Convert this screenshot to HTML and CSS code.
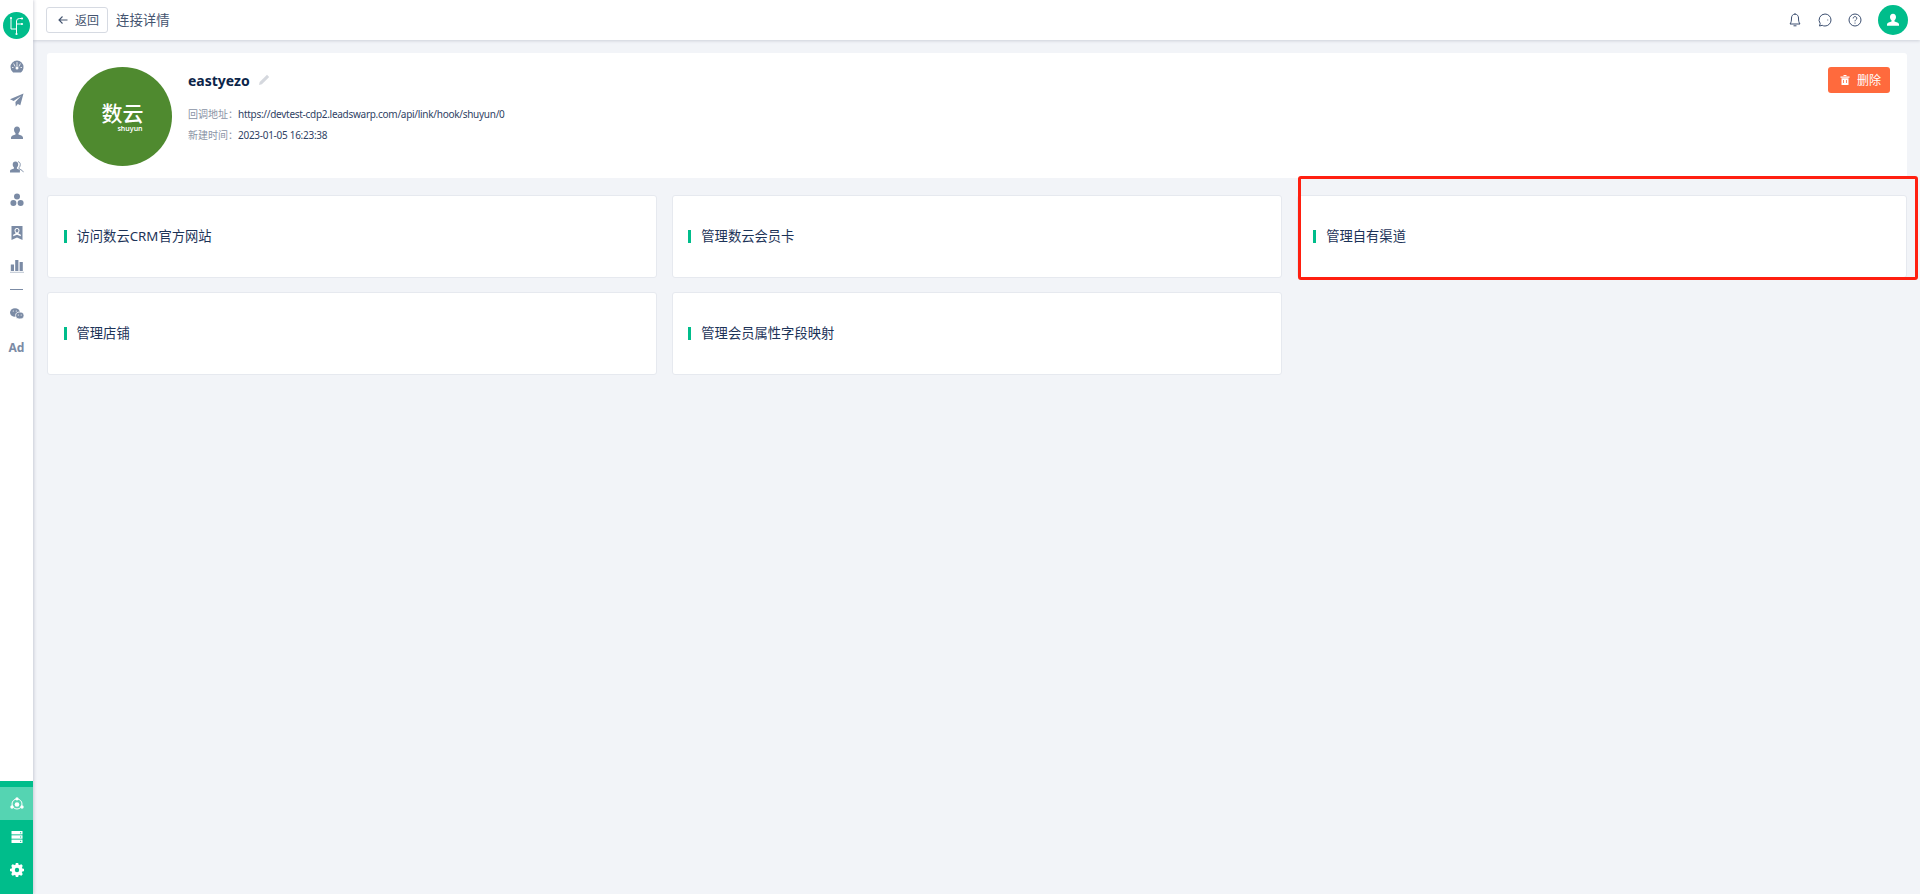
FILE: index.html
```html
<!DOCTYPE html>
<html lang="zh-CN">
<head>
<meta charset="utf-8">
<title>连接详情</title>
<link rel="stylesheet" href="styles.css">
</head>
<body>
<div class="app">
  <aside class="sidebar">
    <div class="logo">
      <svg viewBox="0 0 27 27" width="27" height="27"><circle cx="13.5" cy="13.5" r="13.5" fill="#00bd8b"/><g fill="none" stroke="#fff" stroke-width="1"><path d="M8 6v11h5.500v5M13.500 17v-8q0-2.500 3-2.500h2.500M13.500 12h5.500"/></g><g fill="#fff"><circle cx="8" cy="6" r="1.100"/><circle cx="19" cy="6.500" r="1.100"/><circle cx="19" cy="12" r="1.100"/><circle cx="13.500" cy="22" r="1.100"/></g></svg>
    </div>
    <nav class="nav">
      <a class="nav-item"><svg viewBox="0 0 14 14" class="ic"><path d="M7 .5a6.500 6.500 0 0 1 6.500 6.500c0 2.300-1 4.300-2.600 5.600H3.100A7 7 0 0 1 .5 7 6.500 6.500 0 0 1 7 .5z"/><path d="M7 2v4.500M3.600 3.500l1.500 3M10.400 3.500l-1.500 3M2 7.500h1.500M10.500 7.500H12" stroke="#fff" stroke-width=".8"/><circle cx="7" cy="8" r="1.500" fill="#fff"/></svg></a>
      <a class="nav-item"><svg viewBox="0 0 14 14" class="ic"><path d="M13.500.5 0 6.200l3.700 1.700L11 3 5.400 9l.4 4.500 2-2.500 2.500 1.200z"/></svg></a>
      <a class="nav-item"><svg viewBox="0 0 14 14" class="ic"><path d="M7 .5c1.900 0 3 1.500 3 3.300 0 1.500-.7 2.800-1.500 3.400v1.300c1.800.6 4.500 1.300 4.500 3v1.500H1v-1.500c0-1.700 2.700-2.400 4.500-3V7.200C4.700 6.600 4 5.300 4 3.800 4 2 5.100.5 7 .5z"/></svg></a>
      <a class="nav-item"><svg viewBox="0 0 14 14" class="ic"><path d="M5.500 1.500c1.700 0 2.700 1.300 2.700 3 0 1.400-.6 2.500-1.300 3.100v1.100c1 .3 2.300.7 3 1.400v2.400H0V11c0-1.300 2.200-1.900 4-2.400V7.600c-.7-.6-1.300-1.700-1.300-3.100 0-1.700 1-3 2.800-3z"/><path d="M8 1.600c1.500.3 2.300 1.500 2.300 3 0 1.200-.5 2.300-1.200 3v1.300l3 1.500 1.400 1.800" fill="none" stroke="#7b8ba5" stroke-width=".9"/></svg></a>
      <a class="nav-item"><svg viewBox="0 0 14 14" class="ic"><circle cx="7" cy="3.600" r="3"/><circle cx="3.400" cy="10" r="3"/><circle cx="10.600" cy="10" r="3"/></svg></a>
      <a class="nav-item"><svg viewBox="0 0 14 14" class="ic"><path fill-rule="evenodd" d="M1.500 0h11v14L7 11.500 1.500 14zM7 2c-1.500 0-2.500 1.100-2.500 2.600 0 1 .4 1.800 1 2.300v.6l-2.300 1.300v1.400L7 8.800l3.800 1.400V8.800L8.500 7.500v-.6c.6-.5 1-1.300 1-2.300C9.500 3.100 8.500 2 7 2zM7 3c.9 0 1.500.7 1.500 1.600S7.900 6.400 7 6.400 5.500 5.500 5.500 4.600 6.100 3 7 3z"/></svg></a>
      <a class="nav-item"><svg viewBox="0 0 14 14" class="ic"><rect x=".8" y="5.500" width="3.200" height="6.500"/><rect x="5.200" y="1" width="3.200" height="11"/><rect x="9.600" y="3" width="3.200" height="9"/><rect x="0" y="12.800" width="14" height="1" opacity=".5"/></svg></a>
      <div class="nav-sep"></div>
      <a class="nav-item"><svg viewBox="0 0 14 14" class="ic"><ellipse cx="5" cy="5.500" rx="5" ry="4.300"/><ellipse cx="9.800" cy="8.500" rx="4.200" ry="3.500" stroke="#fff" stroke-width=".8"/><circle cx="8.300" cy="8" r=".6" fill="#fff"/><circle cx="11.200" cy="8" r=".6" fill="#fff"/><circle cx="3.300" cy="4" r=".6" fill="#fff"/><circle cx="6.300" cy="4" r=".6" fill="#fff"/></svg></a>
      <a class="nav-item nav-ad">Ad</a>
    </nav>
    <div class="nav-bottom">
      <a class="bottom-item active"><svg viewBox="0 0 14 14" class="ic-w"><circle cx="7" cy="7" r="5" fill="none" stroke="#fff" stroke-width="1"/><circle cx="7" cy="7.500" r="2.300"/><circle cx="7" cy="1.800" r="1.600"/><circle cx="2" cy="10" r="1.700"/><circle cx="12" cy="10" r="1.700"/></svg></a>
      <a class="bottom-item"><svg viewBox="0 0 14 14" class="ic-w"><rect x="1.500" y="1" width="11" height="3.400"/><rect x="1.500" y="5.300" width="11" height="3.400"/><rect x="1.500" y="9.600" width="11" height="3.400"/><rect x="10" y="2.300" width="1.200" height="1" fill="#00bd8b"/><rect x="10" y="6.500" width="1.200" height="1" fill="#00bd8b"/><rect x="10" y="10.800" width="1.200" height="1" fill="#00bd8b"/></svg></a>
      <a class="bottom-item"><svg viewBox="0 0 14 14" class="ic-w"><circle cx="7" cy="7" r="5.700"/><g stroke="#fff" stroke-width="2.600"><path d="M7 0v14M0 7h14M2 2l10 10M12 2 2 12"/></g><circle cx="7" cy="7" r="2.200" fill="#00bd8b"/></svg></a>
    </div>
  </aside>
  <div class="main">
    <header class="topbar">
      <div class="topbar-left">
        <button class="back-btn"><svg viewBox="0 0 12 12" class="back-ic"><path d="M10.500 6H2M5.500 2.500 2 6l3.500 3.500" fill="none" stroke="#44546f" stroke-width="1.100"/></svg><span>返回</span></button>
        <h1 class="page-title">连接详情</h1>
      </div>
      <div class="topbar-right">
        <svg viewBox="0 0 14 14" class="tool-ic"><path d="M7 1.200c-2.300 0-3.500 1.800-3.500 3.800 0 3-.4 4.700-1.500 6h10c-1.100-1.300-1.500-3-1.500-6 0-2-1.200-3.800-3.500-3.800zM5.500 12.800h3M7 .2v1"/></svg>
        <svg viewBox="0 0 14 14" class="tool-ic"><path d="M7 1a6 6 0 0 1 0 12c-1 0-2-.2-2.800-.7L1.500 13l.7-2.500A6 6 0 0 1 7 1z"/><path d="M9.400 7h.8"/></svg>
        <svg viewBox="0 0 14 14" class="tool-ic"><circle cx="7" cy="7" r="6"/><path d="M5.200 5.400c0-1.100.8-1.800 1.800-1.800s1.800.7 1.800 1.700c0 1.400-1.800 1.500-1.800 3M7 9.600v1"/></svg>
        <div class="user-avatar"><svg viewBox="0 0 14 14" width="14" height="14"><path fill="#fff" d="M7 .8c1.900 0 3 1.400 3 3.200 0 1.500-.7 2.600-1.500 3.200v1.200c1.800.5 4.500 1.200 4.500 2.800v1.500H1v-1.500c0-1.600 2.700-2.300 4.500-2.800V7.200C4.700 6.600 4 5.500 4 4 4 2.200 5.100.8 7 .8z"/></svg></div>
      </div>
    </header>
    <main class="content">
      <section class="profile">
        <div class="brand">
          <div class="brand-cn">数云</div>
          <div class="brand-en">shuyun</div>
        </div>
        <div class="profile-info">
          <div class="name-row">
            <span class="name">eastyezo</span>
            <svg viewBox="0 0 12 12" class="pencil"><path d="M9 .8l2.200 2.200-7.300 7.300L1 11l.7-2.900z" fill="#d5d8de"/></svg>
          </div>
          <div class="meta"><span class="meta-label">回调地址：</span>https://devtest-cdp2.leadswarp.com/api/link/hook/shuyun/0</div>
          <div class="meta"><span class="meta-label">新建时间：</span>2023-01-05 16:23:38</div>
        </div>
        <button class="del-btn"><svg viewBox="0 0 12 12" class="del-ic"><path fill="#fff" d="M1.500 2.500h9v1.200h-9zM4.500 1h3v1h-3zM2.500 4.300h7V11h-7z"/><path d="M4.500 6v3M7.500 6v3" stroke="#ff6a3d" stroke-width=".8"/></svg><span>删除</span></button>
      </section>
      <section class="cards">
        <a class="card"><span class="card-title">访问数云CRM官方网站</span></a>
        <a class="card"><span class="card-title">管理数云会员卡</span></a>
        <a class="card"><span class="card-title">管理自有渠道</span></a>
        <a class="card"><span class="card-title">管理店铺</span></a>
        <a class="card"><span class="card-title">管理会员属性字段映射</span></a>
      </section>
    </main>
  </div>
</div>
<div class="annotation"></div>
</body>
</html>
```
FILE: styles.css
```css
* { box-sizing: border-box; }
html, body { margin: 0; height: 100%; }
body {
  font-family: "Noto Sans", "Noto Sans CJK SC", sans-serif;
  color: #1c2f52;
  background: #f2f4f8;
  overflow: hidden;
}
.app { display: flex; height: 894px; }

.sidebar {
  width: 33px;
  flex: none;
  background: #fff;
  display: flex;
  flex-direction: column;
  box-shadow: 1px 0 3px rgba(60, 70, 100, .22);
  position: relative;
  z-index: 2;
}
.logo { height: 50px; padding: 12px 0 0 3px; line-height: 0; }
.nav { display: flex; flex-direction: column; flex: 1; }
.nav-item {
  height: 33.3px;
  display: flex;
  align-items: center;
  justify-content: center;
  color: #7b8ba5;
}
.ic { width: 14px; height: 14px; fill: #7b8ba5; }
.nav-sep { height: 1px; background: #7b8ba5; width: 13px; margin: 6px 0 7px 10px; }
.nav-ad { font-size: 12px; font-weight: 700; color: #7b8ba5; }
.nav-bottom { background: #00bd8b; padding: 6px 0 7px; }
.bottom-item { height: 33.4px; display: flex; align-items: center; justify-content: center; }
.bottom-item.active { background: #55d4b2; }
.ic-w { width: 14px; height: 14px; fill: #fff; }

.main { flex: 1; min-width: 0; display: flex; flex-direction: column; }
.topbar {
  height: 40px;
  flex: none;
  background: #fff;
  display: flex;
  align-items: center;
  justify-content: space-between;
  padding: 0 12px 0 13px;
  box-shadow: 0 1px 3px rgba(60, 70, 100, .2);
  position: relative;
  z-index: 1;
}
.topbar-left { display: flex; align-items: center; gap: 8px; }
.back-btn {
  width: 62px;
  height: 26px;
  display: flex;
  align-items: center;
  gap: 6px;
  padding: 0 0 0 10px;
  border: 1px solid #d6dae2;
  border-radius: 3px;
  background: #fff;
  font: inherit;
  font-size: 12px;
  color: #44546f;
}
.back-ic { width: 12px; height: 12px; }
.page-title { margin: 0; font-size: 13.4px; font-weight: 400; color: #44546f; line-height: 20px; }
.topbar-right { display: flex; align-items: center; }
.tool-ic {
  width: 14px;
  height: 14px;
  margin-right: 16px;
  fill: none;
  stroke: #3c4f70;
  stroke-width: 1;
}
.user-avatar {
  width: 30px;
  height: 30px;
  border-radius: 50%;
  background: #00bd8b;
  display: flex;
  align-items: center;
  justify-content: center;
}

.content { flex: 1; padding: 13px 13px 0 14px; }
.profile {
  height: 125px;
  background: #fff;
  border-radius: 3px;
  display: flex;
  align-items: flex-start;
  padding: 14px 17px 0 26px;
}
.brand {
  width: 99px;
  height: 99px;
  flex: none;
  border-radius: 50%;
  background: #4f8a2f;
  color: #fff;
  text-align: center;
  padding-top: 35px;
}
.brand-cn { font-size: 21px; line-height: 23px; font-weight: 500; }
.brand-en { font-size: 7px; line-height: 7px; font-weight: 600; padding-left: 15px; }
.profile-info { flex: 1; padding: 3px 0 0 16px; }
.name-row { display: flex; align-items: center; gap: 8px; height: 20px; }
.name { font-size: 14px; font-weight: 700; color: #0c2549; }
.pencil { width: 12px; height: 12px; }
.meta { font-size: 10px; line-height: 21px; color: #2f4264; letter-spacing: -.28px; }
.name-row + .meta { margin-top: 14px; }
.meta-label { color: #8a94a6; letter-spacing: 0; }
.del-btn {
  width: 62px;
  height: 26px;
  display: flex;
  align-items: center;
  gap: 6px;
  padding: 0 0 0 11px;
  border: 0;
  border-radius: 3px;
  background: #ff6a3d;
  color: #fff;
  font: inherit;
  font-size: 12px;
}
.del-ic { width: 12px; height: 12px; }

.cards {
  display: grid;
  grid-template-columns: repeat(3, 1fr);
  gap: 14px 14.5px;
  margin-top: 17px;
}
.card {
  height: 83px;
  background: #fff;
  border: 1px solid #e6e9ef;
  border-radius: 3px;
  display: flex;
  align-items: center;
  padding: 0 15.5px;
}
.card-title {
  display: block;
  border-left: 3px solid #00bd8b;
  padding-left: 10px;
  font-size: 13.3px;
  line-height: 13px;
  color: #1c3358;
}

.annotation {
  position: absolute;
  left: 1298px;
  top: 176px;
  width: 620px;
  height: 104px;
  border: 3px solid #ff1f10;
  border-radius: 3px;
  z-index: 5;
}
```
